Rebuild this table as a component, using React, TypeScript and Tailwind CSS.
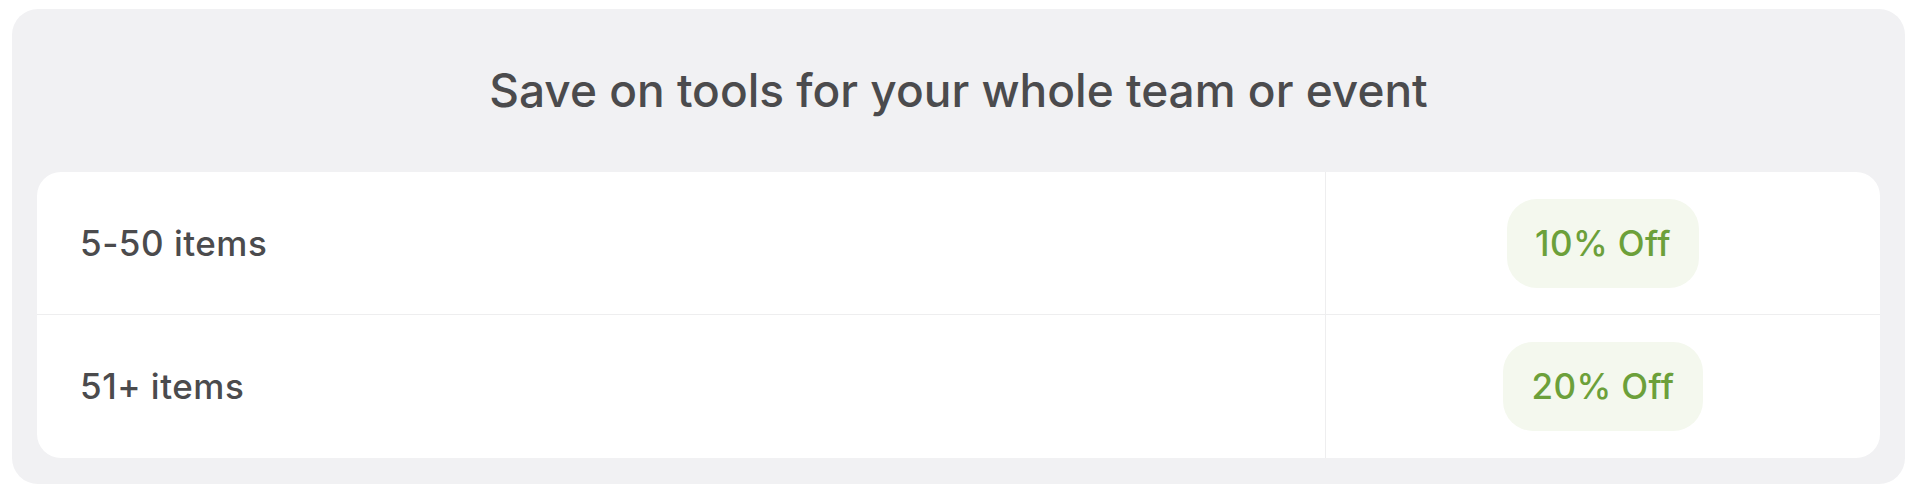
const tiers = [
  { label: "5-50 items", discount: "10% Off" },
  { label: "51+ items", discount: "20% Off" },
];

const App = () => {
  return (
    <div className="w-[1920px] h-[498px] bg-white pl-[12px] pr-[15px] pt-[9px] font-['Inter',sans-serif]">
      <div className="h-[475px] bg-[#f1f1f3] rounded-[26px] px-[25px] pb-[26px] flex flex-col">
        <div className="h-[163px] flex items-center justify-center">
          <h2 className="text-[46px] font-medium text-[#4b4b4d]">
            Save on tools for your whole team or event
          </h2>
        </div>
        <div className="flex-1 bg-white rounded-[24px] grid grid-cols-[1289px_1fr] grid-rows-2 overflow-hidden">
          {tiers.map((t, i) => (
            <div key={t.label} className="contents">
              <div
                className={`flex items-center pl-[43px] border-r border-[#eeeeef] ${
                  i === 0 ? "border-b" : ""
                }`}
              >
                <span className="text-[35px] font-medium tracking-[0.5px] text-[#4b4b4d]">{t.label}</span>
              </div>
              <div
                className={`flex items-center justify-center border-[#eeeeef] ${
                  i === 0 ? "border-b" : ""
                }`}
              >
                <span className="h-[89px] px-[28px] rounded-[30px] bg-[#f4f8ee] flex items-center justify-center text-[35px] font-medium tracking-[0.4px] text-[#6ca03a]">
                  {t.discount}
                </span>
              </div>
            </div>
          ))}
        </div>
      </div>
    </div>
  );
};

export default App;
